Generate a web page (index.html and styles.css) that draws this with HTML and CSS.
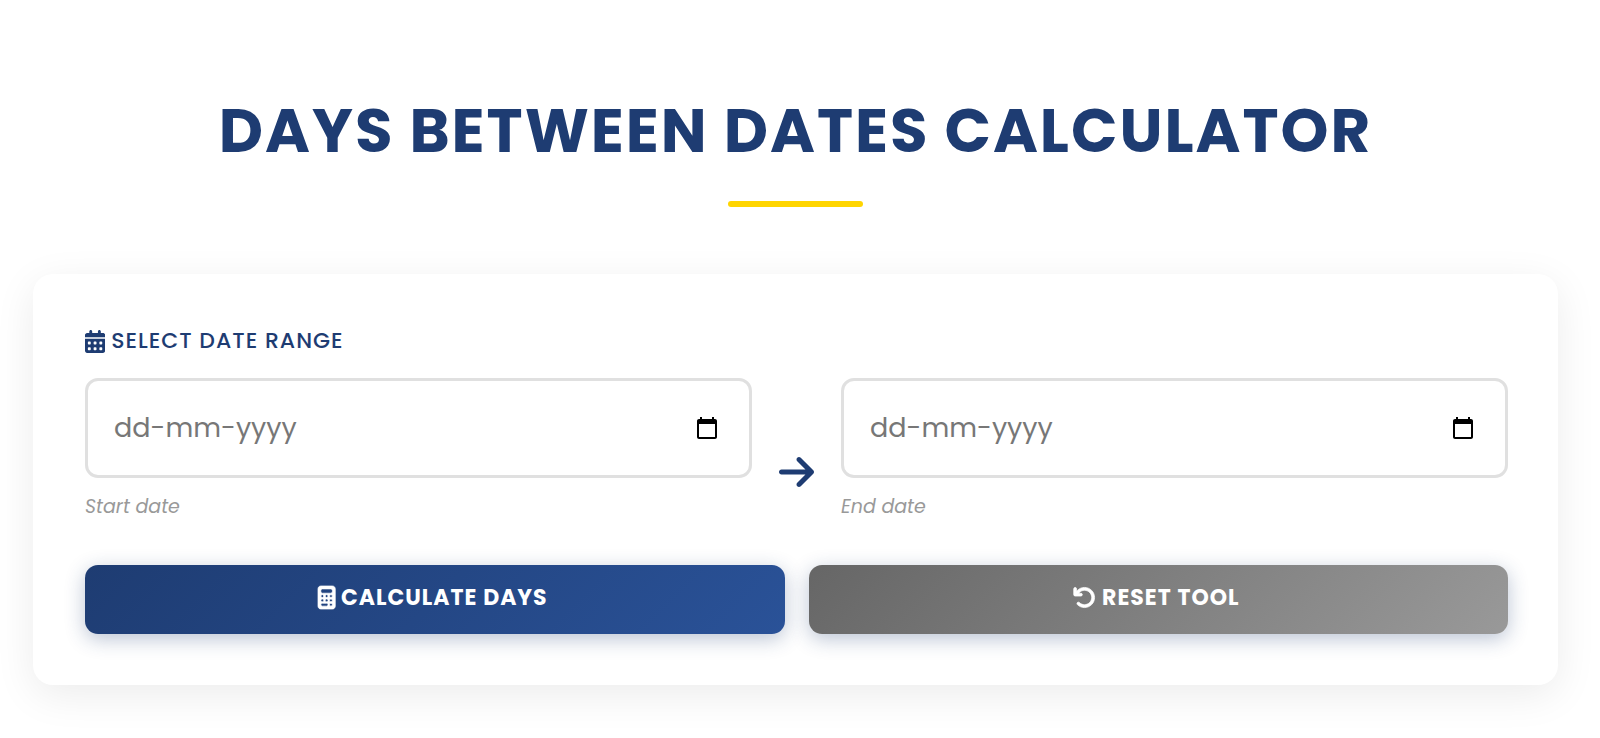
FILE: index.html
```html
<!DOCTYPE html>
<html lang="en">
<head>
  <meta charset="UTF-8">
  <title>Days Between Dates Calculator</title>
  <meta name="viewport" content="width=device-width, initial-scale=1.0">

  <link rel="stylesheet" href="styles.css">
</head>
<body>

  <h1>Days Between Dates Calculator</h1>

  <form class="card">
    <label class="range-label" for="startDate">
      <svg class="icon" viewBox="0 0 448 512" aria-hidden="true"><path d="M128 0c17.700 0 32 14.300 32 32V64H288V32c0-17.700 14.300-32 32-32s32 14.300 32 32V64h48c26.500 0 48 21.500 48 48v48H0V112C0 85.500 21.500 64 48 64H96V32c0-17.700 14.300-32 32-32zM0 192H448V464c0 26.500-21.500 48-48 48H48c-26.500 0-48-21.500-48-48V192zm64 80v32c0 8.800 7.200 16 16 16h32c8.800 0 16-7.200 16-16V272c0-8.800-7.200-16-16-16H80c-8.800 0-16 7.200-16 16zm128 0v32c0 8.800 7.200 16 16 16h32c8.800 0 16-7.200 16-16V272c0-8.800-7.200-16-16-16H208c-8.800 0-16 7.200-16 16zm144-16c-8.800 0-16 7.200-16 16v32c0 8.800 7.200 16 16 16h32c8.800 0 16-7.200 16-16V272c0-8.800-7.200-16-16-16H336zM64 400v32c0 8.800 7.200 16 16 16h32c8.800 0 16-7.200 16-16V400c0-8.800-7.200-16-16-16H80c-8.800 0-16 7.200-16 16zm144-16c-8.800 0-16 7.200-16 16v32c0 8.800 7.200 16 16 16h32c8.800 0 16-7.200 16-16V400c0-8.800-7.200-16-16-16H208zm112 16v32c0 8.800 7.200 16 16 16h32c8.800 0 16-7.200 16-16V400c0-8.800-7.200-16-16-16H336c-8.800 0-16 7.200-16 16z"/></svg>
      Select Date Range
    </label>

    <div class="date-range">
      <div class="date-group">
        <div class="date-field">
          <input type="text" id="startDate" placeholder="dd-mm-yyyy" inputmode="numeric" aria-describedby="startHint">
          <button type="button" class="picker" aria-label="Pick start date">
            <svg viewBox="0 0 24 24" aria-hidden="true"><path d="M20 3h-1V1h-2v2H7V1H5v2H4c-1.100 0-2 .900-2 2v16c0 1.100.900 2 2 2h16c1.100 0 2-.900 2-2V5c0-1.100-.900-2-2-2zm0 18H4V8h16v13z"/></svg>
          </button>
        </div>
        <span class="hint" id="startHint">Start date</span>
      </div>

      <svg class="arrow" viewBox="0 0 448 512" aria-hidden="true"><path d="M438.600 278.600c12.500-12.500 12.500-32.800 0-45.300l-160-160c-12.500-12.500-32.800-12.500-45.300 0s-12.500 32.800 0 45.300L338.800 224 32 224c-17.700 0-32 14.300-32 32s14.300 32 32 32l306.700 0L233.400 393.400c-12.500 12.500-12.500 32.800 0 45.300s32.800 12.500 45.300 0l160-160z"/></svg>

      <div class="date-group">
        <div class="date-field">
          <input type="text" id="endDate" placeholder="dd-mm-yyyy" inputmode="numeric">
          <button type="button" class="picker" aria-label="Pick end date">
            <svg viewBox="0 0 24 24" aria-hidden="true"><path d="M20 3h-1V1h-2v2H7V1H5v2H4c-1.100 0-2 .900-2 2v16c0 1.100.900 2 2 2h16c1.100 0 2-.900 2-2V5c0-1.100-.900-2-2-2zm0 18H4V8h16v13z"/></svg>
          </button>
        </div>
        <label class="hint" for="endDate">End date</label>
      </div>
    </div>

    <div class="actions">
      <button type="button" class="btn btn-primary">
        <svg class="icon icon-calc" viewBox="0 0 384 512" aria-hidden="true"><path d="M64 0C28.700 0 0 28.700 0 64V448c0 35.300 28.700 64 64 64H320c35.300 0 64-28.700 64-64V64c0-35.300-28.700-64-64-64H64zM96 64H288c17.700 0 32 14.300 32 32v32c0 17.700-14.300 32-32 32H96c-17.700 0-32-14.300-32-32V96c0-17.700 14.300-32 32-32zm32 160a32 32 0 1 1 -64 0 32 32 0 1 1 64 0zM96 352a32 32 0 1 1 0-64 32 32 0 1 1 0 64zM64 416c0-17.700 14.300-32 32-32h96c17.700 0 32 14.300 32 32s-14.300 32-32 32H96c-17.700 0-32-14.300-32-32zM192 256a32 32 0 1 1 0-64 32 32 0 1 1 0 64zm32 64a32 32 0 1 1 -64 0 32 32 0 1 1 64 0zm64-64a32 32 0 1 1 0-64 32 32 0 1 1 0 64zm32 64a32 32 0 1 1 -64 0 32 32 0 1 1 64 0zM288 448a32 32 0 1 1 0-64 32 32 0 1 1 0 64z"/></svg>
        Calculate Days
      </button>
      <button type="reset" class="btn btn-reset">
        <svg class="icon" viewBox="0 0 512 512" aria-hidden="true"><path d="M125.700 160H176c17.700 0 32 14.300 32 32s-14.300 32-32 32H48c-17.700 0-32-14.300-32-32V64c0-17.700 14.300-32 32-32s32 14.300 32 32v51.200L97.600 97.600c87.500-87.500 229.300-87.500 316.800 0s87.500 229.300 0 316.800s-229.300 87.500-316.800 0c-12.500-12.500-12.500-32.800 0-45.300s32.800-12.500 45.300 0c62.500 62.500 163.800 62.500 226.300 0s62.500-163.800 0-226.300s-163.800-62.500-226.300 0L125.700 160z"/></svg>
        Reset Tool
      </button>
    </div>
  </form>

</body>
</html>
```

FILE: styles.css
```css
* {
  box-sizing: border-box;
}

body {
  font-family: Poppins, Inter, sans-serif;
  margin: 0;
  padding: 83px 42px 52px 33px;
  background: #fff;
  color: #1e3c72;
}

h1 {
  margin: 0 0 67px;
  font-size: 61px;
  line-height: 96px;
  font-weight: 700;
  letter-spacing: 2px;
  text-align: center;
  text-transform: uppercase;
}

h1::after {
  content: "";
  display: block;
  width: 135px;
  height: 6px;
  margin: 22px auto 0;
  background: #ffd500;
  border-radius: 3px;
}

.card {
  padding: 52px 50px 51px 52px;
  background: #fff;
  border-radius: 20px;
  box-shadow: 0 10px 40px rgba(0, 0, 0, 0.08);
}

.icon {
  height: 23px;
  fill: currentColor;
}

.range-label {
  display: flex;
  align-items: center;
  gap: 6px;
  margin-bottom: 22px;
  font-size: 22px;
  line-height: 30px;
  font-weight: 500;
  letter-spacing: 1px;
  text-transform: uppercase;
}

.date-range {
  display: flex;
  align-items: center;
  gap: 27px;
}

.date-group {
  flex: 1;
}

.date-field {
  display: flex;
  align-items: center;
  height: 100px;
  padding: 0 30px 0 26px;
  border: 3px solid #e0e0e0;
  border-radius: 13px;
}

.date-field:focus-within {
  border-color: #2a5298;
}

.date-field input {
  flex: 1;
  min-width: 0;
  padding: 0;
  border: none;
  outline: none;
  background: none;
  font-family: inherit;
  font-size: 27px;
}

.date-field input::placeholder {
  color: #777;
}

.picker {
  display: flex;
  padding: 0;
  border: none;
  background: none;
  cursor: pointer;
}

.picker svg {
  width: 24px;
  height: 24px;
}

.hint {
  display: block;
  margin-top: 15px;
  font-size: 19px;
  line-height: 28px;
  font-style: italic;
  color: #999;
}

.arrow {
  width: 35px;
  height: 40px;
  margin-top: 44px;
  fill: #1e3c72;
}

.actions {
  display: flex;
  gap: 24px;
  margin-top: 44px;
}

.btn {
  flex: 1;
  display: flex;
  align-items: center;
  justify-content: center;
  gap: 6px;
  height: 69px;
  padding: 0 24px 4px 20px;
  border: none;
  border-radius: 13px;
  box-shadow: 0 5px 20px rgba(30, 60, 114, 0.3);
  color: #fff;
  font-family: inherit;
  font-size: 22px;
  font-weight: 700;
  letter-spacing: 1px;
  text-transform: uppercase;
  cursor: pointer;
}

.btn .icon {
  overflow: visible;
  stroke: currentColor;
  stroke-width: 16;
}

.btn-primary {
  background: linear-gradient(135deg, #1e3c72, #2a5298);
}

.btn-reset {
  background: linear-gradient(135deg, #666, #999);
}

@media (max-width: 900px) {
  h1 {
    font-size: 36px;
    line-height: 48px;
  }

  .date-range,
  .actions {
    flex-direction: column;
    align-items: stretch;
  }

  .arrow {
    margin: 0 auto;
  }

  .btn {
    flex: none;
  }
}
```
